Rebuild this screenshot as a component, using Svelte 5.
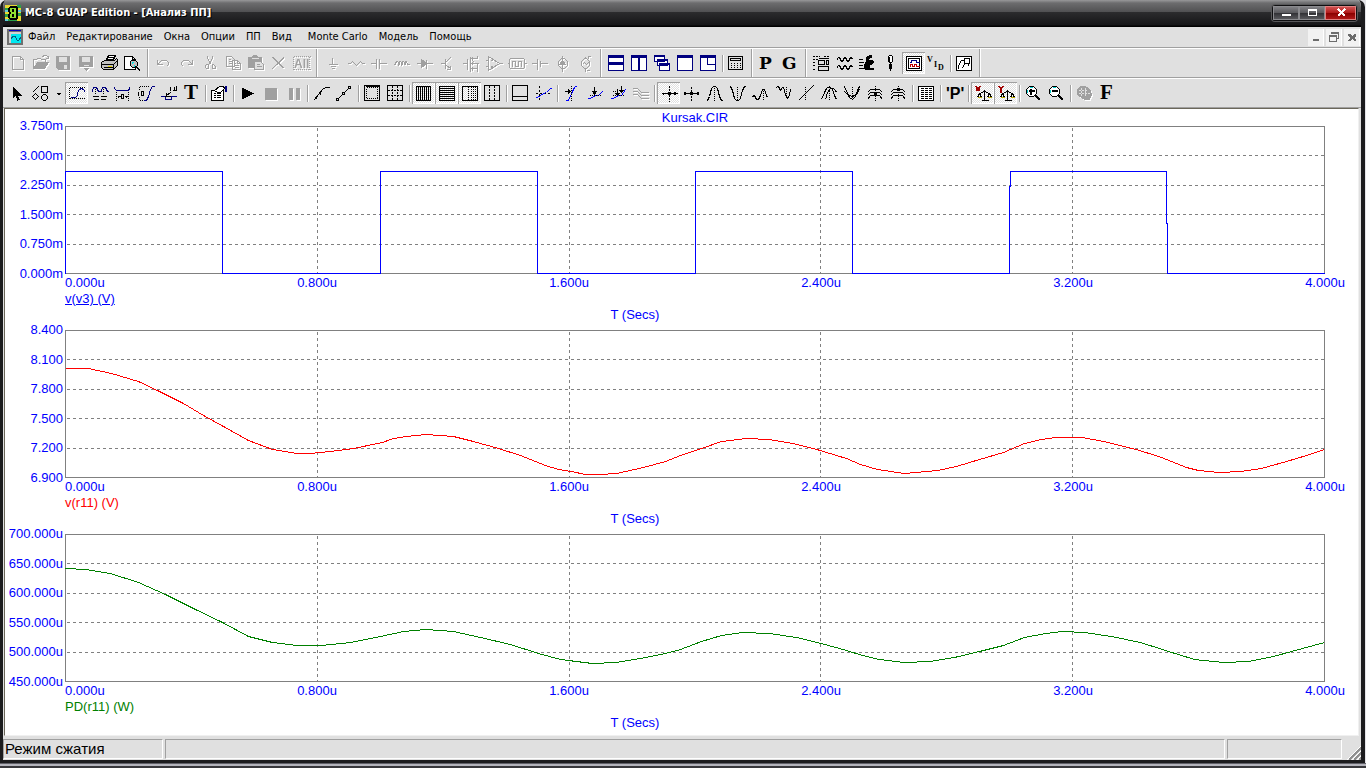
<script lang="ts">
  // [stroke, fill, path data, stroke dash]
  type Shape = [string, string, string, string?]
  // [text, x, y, size, colour, family]
  type Glyph = [string, number, number, number, string, string]

  interface Tool {
    id: string
    label: string
    off?: boolean
    on?: boolean
    narrow?: boolean
    shapes?: Shape[]
    glyphs?: Glyph[]
  }

  interface Chart {
    name: string
    color: string
    ticks: string[]
    points: string
  }

  const K = '#000'
  const N = '#000080'
  const B = '#0000ff'
  const G = '#a0a0a0'
  const W = '#fff'
  const X = 'none'

  const fileTools: Tool[] = [
    { id: 'new', label: 'Новый', off: true, shapes: [[G, X, 'M6 4h8l3 3v10H6zM14 4v3h3']] },
    { id: 'open', label: 'Открыть', off: true, shapes: [[G, X, 'M4 16V7h3l1-1h3l1 1h4v3M13 4l2-1h2l2 2M19 3v3h-3'], [G, G, 'M4 16l4-6h11l-4 6z']] },
    { id: 'save', label: 'Сохранить', off: true, shapes: [[G, G, 'M4 4h13v13H6l-2-2z'], ['#e0e0e0', '#e0e0e0', 'M7 5h7v4H7zM12 13h2v3h-2z']] },
    { id: 'saveas', label: 'Сохранить как', off: true, shapes: [[G, G, 'M4 4h13v10H4zM9 16h4l-2 2z'], ['#e0e0e0', '#e0e0e0', 'M7 5h7v4H7zM8 13h5']] },
    {
      id: 'print', label: 'Печать',
      shapes: [[K, W, 'M7 9l3-6h7l-3 6z'], [K, '#c0c0c0', 'M3 10l3-2h10l2-2 1 1v6l-4 4H5l-2-2z'], [K, X, 'M3 12h12l4-4M5 15h10M9 5h6M8 7h6M15 12v5'], ['#e0d000', X, 'M9 14h4']]
    },
    {
      id: 'preview', label: 'Просмотр',
      shapes: [[K, W, 'M3 4h8l3 3v10H3zM11 4v3h3'], [K, '#c0c0c0', 'M10 8h4l2 2v3l-2 2h-3l-2-2v-4z'], ['#00e0e0', X, 'M11 9v2M12 9v1M13 12v2'], [K, K, 'M15 14l3 3v1l-4-4z']]
    }
  ]

  const editTools: Tool[] = [
    { id: 'undo', label: 'Отменить', off: true, shapes: [[G, X, 'M5 7v5h5M5 12l4-4h5l2 2v2l-2 2']] },
    { id: 'redo', label: 'Повторить', off: true, shapes: [[G, X, 'M17 7v5h-5M17 12l-4-4H8l-2 2v2l2 2']] },
    { id: 'cut', label: 'Вырезать', off: true, shapes: [[G, X, 'M9 3v3l4 6M14 3v3l-4 6M8 12h2v4H8l-1-1v-2zM14 12h1l2 2v2h-3z']] },
    { id: 'copy', label: 'Копировать', off: true, shapes: [[G, X, 'M5 4h5l3 3v7H5zM7 7h2M7 9h4M7 11h3M11 8h5l3 3v6h-8zM16 8v3h3M13 11h1M13 13h4M13 15h4']] },
    { id: 'paste', label: 'Вставить', off: true, shapes: [[G, G, 'M4 5h3l2-2h3l2 2h3v10H4z'], ['#e0e0e0', X, 'M7 6h7'], [G, '#e0e0e0', 'M10 9h6l3 3v5h-9zM12 12h3M12 14h5']] },
    { id: 'delete', label: 'Удалить', off: true, shapes: [[G, X, 'M5 5l11 11M6 5l11 11M17 5L5 16M16 5L6 15']] },
    {
      id: 'all', label: 'Выделить все', off: true,
      shapes: [[G, X, 'M3 4h17M3 17h17M3 4v13M19 4v13', '1 1']],
      glyphs: [['All', 4, 16, 12, G, 'Liberation Sans']]
    }
  ]

  const partTools: Tool[] = [
    { id: 'ground', label: 'Земля', off: true, shapes: [[G, X, 'M11 5v7M7 12h9M9 14h5M10 16h3']] },
    { id: 'resistor', label: 'Резистор', off: true, shapes: [[G, X, 'M3 11h3l2-2 4 4 4-4 2 2h2']] },
    { id: 'capacitor', label: 'Конденсатор', off: true, shapes: [[G, X, 'M3 11h6M9 6v10M12 6v10M12 11h7']] },
    { id: 'inductor', label: 'Индуктивность', off: true, shapes: [[G, X, 'M3 12h2v-2l2-1 2 2-1 2M8 13v-3l2-1 2 2-1 2M11 13v-3l2-1 2 2-1 2M14 12v-2l2-1 1 3h2']] },
    { id: 'diode', label: 'Диод', off: true, shapes: [[G, X, 'M3 11h16M13 7v9'], [G, G, 'M8 7v8l5-4z']] },
    { id: 'npn', label: 'Транзистор', off: true, shapes: [[G, X, 'M4 11h5M9 6v10M9 10l5-5M9 12l6 5M14 13v4h-4']] },
    { id: 'mos', label: 'МОП', off: true, shapes: [[G, X, 'M3 11h5M8 6v11M11 4v15M13 4v4M13 14v4M11 6h7M11 11h8M11 16h7M18 3v3M18 11v8M14 9l-2 2 2 2']] },
    { id: 'opamp', label: 'ОУ', off: true, shapes: [[G, X, 'M6 4v14l11-7zM3 8h3M3 14h3M17 11h3M8 8h2M8 14h2M9 13v3']] },
    { id: 'pulse', label: 'Генератор', off: true, shapes: [[G, X, 'M5 6h13l1 1v8l-1 1H5l-1-1V7zM2 11h2M19 11h2M7 14V9h3v5h3V9h3v5']] },
    { id: 'battery', label: 'Батарея', off: true, shapes: [[G, X, 'M3 11h6M9 6v11M12 8v6M12 11h7']] },
    { id: 'isource', label: 'Источник тока', off: true, shapes: [[G, X, 'M11 3v16M10 6h3l3 3v4l-3 3h-3l-3-3V9z'], [G, G, 'M11 8l3 4H8z']] },
    { id: 'vsource', label: 'Источник напряжения', off: true, shapes: [[G, X, 'M11 4v2M11 16v3M10 6h2l3 3v4l-3 3h-2l-3-3V9zM13 4h3M14 3v3M12 18h3M8 12l2-2 2 2 2-2']] }
  ]

  const windowTools: Tool[] = [
    { id: 'tileh', label: 'Горизонтально', shapes: [[N, W, 'M3 3h15v7H3zM3 11h15v7H3z'], [N, X, 'M3 4h15M3 5h15M3 12h15']] },
    { id: 'tilev', label: 'Вертикально', shapes: [[N, W, 'M3 3h7v15H3zM11 3h7v15h-7z'], [N, X, 'M3 4h15M3 5h15']] },
    { id: 'cascade', label: 'Каскадом', shapes: [[N, W, 'M3 3h10v6H3zM6 7h10v6H6zM8 11h10v7H8z'], [N, X, 'M3 4h10M6 8h10M8 12h10']] },
    { id: 'maximize', label: 'Развернуть', shapes: [[N, W, 'M3 3h15v15H3z'], [N, X, 'M3 4h15M3 5h15']] },
    { id: 'overlap', label: 'Поверх', shapes: [[N, W, 'M3 3h15v15H3z'], [N, X, 'M3 4h15M3 5h15M10 5v7h8']] }
  ]

  const calcTools: Tool[] = [
    { id: 'calc', label: 'Калькулятор', shapes: [[K, X, 'M3 4h14v13H3zM5 6h10v2H5z'], [K, X, 'M5 11h11M5 13h11M5 15h11', '1 2']] }
  ]

  const letterTools: Tool[] = [
    { id: 'p', label: 'P', glyphs: [['P', 3, 17, 17, K, 'DejaVu Serif']] },
    { id: 'g', label: 'G', glyphs: [['G', 3, 17, 17, K, 'DejaVu Serif']] }
  ]

  const analysisTools: Tool[] = [
    { id: 'limits', label: 'Пределы', shapes: [[K, X, 'M2 4h7M13 4h5M2 7h5M2 10h3M2 13h3M2 17h3', '2 1'], [K, X, 'M8 8h6v4H8zM16 8h2v4h-2zM8 14h10v4H8zM8 6h10']] },
    { id: 'stepping', label: 'Варьирование', shapes: [[K, X, 'M3 8l2-3h1l2 4h1l2-4h1l2 4h1l2-4h1l1 2M3 16l2-3h1l2 4h1l2-4h1l2 4h1l2-4h1l1 2']] },
    { id: 'optimize', label: 'Оптимизация', shapes: [[K, X, 'M2 7h4M2 10h5M2 13h4M2 16h6'], [K, K, 'M8 13l2-4V5l3-2h2v2l-3 1v2h4l1 2-4 3v3h4v1H9l-1-1z']] },
    { id: 'watch', label: 'Наблюдение', shapes: [[K, W, 'M10 3h2l1 1v5l-1 1h-2l-1-1V4z'], [K, X, 'M11 10v8M10 11v5M12 11v5M10 4v5']] },
    { id: 'plot', label: 'График', on: true, shapes: [[K, W, 'M4 4h15v14H4z'], [K, X, 'M6 6h11v10H6z'], [N, X, 'M7 10h2V8h5v2h3'], ['#c00000', X, 'M7 14h1v-2h2v2h2v-2h2v2h3']] },
    { id: 'vid', label: 'VID', glyphs: [['V', 2, 10, 8, K, 'Liberation Serif'], ['I', 9, 15, 8, K, 'Liberation Serif'], ['D', 13, 18, 8, K, 'Liberation Serif']] }
  ]

  const probeTools: Tool[] = [
    { id: 'region', label: 'Область', shapes: [[K, W, 'M3 4h15v14H3z'], [K, X, 'M5 16v-3l3-5h3M11 6h5v5h-5zM11 11l-2 5M14 11l2 3']] }
  ]

  const topRow = [
    { tools: fileTools, sep: 'wide' },
    { tools: editTools, sep: 'wide' },
    { tools: partTools, sep: 'wide' },
    { tools: windowTools, sep: 'thin' },
    { tools: calcTools, sep: 'wide' },
    { tools: letterTools, sep: 'wide' },
    { tools: analysisTools, sep: 'thin' },
    { tools: probeTools, sep: 'wide' }
  ]

  const bottomRow: { tools: Tool[]; sep: string }[] = [
    {
      sep: 'thin',
      tools: [
        { id: 'select', label: 'Выбор', shapes: [[X, K, 'M6 4v12l3-3 2 5 2-1-2-4h4z']] },
        { id: 'shapes', label: 'Фигуры', shapes: [[K, X, 'M3 10l6-6M12 4h6v6h-6zM6 11l3 3-3 3-3-3zM14 12h2l2 2v2l-2 2h-2l-2-2v-2z']] },
        { id: 'more', label: 'Список фигур', narrow: true, shapes: [[X, K, 'M4 10h5l-2.5 3z']] },
        { id: 'scale', label: 'Масштаб', on: true, shapes: [[K, X, 'M4 5h15M4 5v12M4 16h15', '1 1'], [N, X, 'M5 15h5l2-2v-3l2-3 2-1 2 1 2 3']] },
        { id: 'cursor', label: 'Курсор', shapes: [[N, X, 'M3 9h1l1-4h3l2 4h3l1-4h3l2 4h1'], [K, X, 'M7 6v5M15 6v5', '1 1'], [K, X, 'M4 14h6M12 14h6M5 17h5M12 17h5']] },
        { id: 'htag', label: 'Горизонтальная метка', shapes: [[N, X, 'M3 4v2l2 2h12l1-2V4'], [K, X, 'M5 9v9M17 9v9', '1 1'], [K, X, 'M6 14h3M13 14h3M10 12h2v4h-2zM7 13v2M15 13v2']] },
        { id: 'vtag', label: 'Вертикальная метка', shapes: [[N, X, 'M9 18h3l2-4 2-7 2-3h2'], [K, X, 'M5 4h9M5 18h4M5 4v4M5 14v4', '1 1'], [K, X, 'M4 9v4M7 9h2v4H7z']] },
        { id: 'ptag', label: 'Метка точки', shapes: [[N, X, 'M3 14h5v3h6v-3h5'], [K, X, 'M8 14l6-5M9 10v4h4M13 4v4M18 4h1v4h-2V4M15 8h1']] },
        { id: 'text', label: 'Текст', glyphs: [['T', 4, 17, 21, K, 'Liberation Serif']] }
      ]
    },
    {
      sep: 'thin',
      tools: [
        { id: 'props', label: 'Свойства', shapes: [[K, W, 'M3 8h12v10H3z'], [K, X, 'M5 11h2M8 11h4M5 13h2M8 13h4M5 15h2M8 15h4'], [K, W, 'M6 8l5-4h4l1 2-4 4H9z'], [N, N, 'M17 4h1v5h-1z']] }
      ]
    },
    {
      sep: 'thin',
      tools: [
        { id: 'run', label: 'Пуск', shapes: [[X, K, 'M5 5v12l12-6z']] },
        { id: 'stop', label: 'Стоп', off: true, shapes: [[X, G, 'M5 5h12v12H5z']] },
        { id: 'pause', label: 'Пауза', off: true, shapes: [[X, G, 'M6 5h4v12H6zM13 5h4v12h-4z']] }
      ]
    },
    {
      sep: 'thin',
      tools: [
        { id: 'tokens', label: 'Маркеры', shapes: [[K, X, 'M3 17h1l8-10 3-2h4M6 13v3M10 9v3']] },
        { id: 'points', label: 'Точки', shapes: [[K, X, 'M3 16h2v2H3zM5 16l4-4M9 10h2v2H9zM11 10l4-4M15 4h2v2h-2z']] }
      ]
    },
    {
      sep: 'thin',
      tools: [
        { id: 'ruler', label: 'Линейка', shapes: [[K, X, 'M3 3h15v15H3zM4 4h13'], [K, X, 'M5 5h12M5 16h12M5 6v10M16 6v10', '1 1']] },
        { id: 'grid', label: 'Сетка', shapes: [[K, X, 'M3 3h15v15H3z'], [K, X, 'M8 3v15M13 3v15M3 8h15M3 13h15', '2 1']] }
      ]
    },
    {
      sep: 'thin',
      tools: [
        { id: 'vgrid', label: 'Вертикальная сетка', on: true, shapes: [[K, X, 'M4 4h14v14H4zM6 4v14M8 4v14M10 4v14M12 4v14M14 4v14M16 4v14']] },
        { id: 'hgrid', label: 'Горизонтальная сетка', on: true, shapes: [[K, X, 'M4 4h15v14H4zM4 6h15M4 8h15M4 10h15M4 12h15M4 14h15M4 16h15']] },
        { id: 'minor', label: 'Мелкая сетка', on: true, shapes: [[K, X, 'M4 4h15v14H4z'], [K, X, 'M10 4v14M13 4v14M15 4v14M17 4v14', '1 1']] },
        { id: 'major', label: 'Крупная сетка', shapes: [[K, X, 'M3 3h15v15H3z'], [K, X, 'M8 3v15M13 3v15', '2 1']] }
      ]
    },
    {
      sep: 'thin',
      tools: [
        { id: 'baseline', label: 'Базовая линия', shapes: [[K, X, 'M3 3h15v15H3zM3 14h15']] },
        { id: 'hcursor', label: 'Перекрестие', shapes: [[K, X, 'M7 3v15M3 11h16', '2 2'], [B, X, 'M3 15h2l6-4 3-1 4-4h1']] }
      ]
    },
    {
      sep: 'thin',
      tools: [
        { id: 'tox', label: 'К точке X', shapes: [[B, X, 'M5 18h3l3-7 3-6 3-2'], [K, X, 'M11 3v15', '1 1'], [K, K, 'M4 9h4M8 7v4l2-2z']] },
        { id: 'toy', label: 'К точке Y', shapes: [[B, X, 'M4 16h3l5-3h3l4-4'], [K, K, 'M11 4v6M9 9h4l-2 3z'], [K, X, 'M6 13h11', '1 1']] },
        { id: 'toperf', label: 'К параметру', shapes: [[B, X, 'M4 16h3l5-3h3l4-6'], [K, K, 'M11 6v6M9 11h4l-2 2zM15 3v6M13 8h4l-2 2z'], [K, X, 'M6 13h11M6 9h6', '1 1']] },
        { id: 'branch', label: 'Ветвь', off: true, shapes: [[G, X, 'M3 6h5l4 4h7M3 9h5l4 4h7M3 12h5l4 4h7']] }
      ]
    },
    {
      sep: 'thin',
      tools: [
        { id: 'next', label: 'Следующая', on: true, shapes: [[K, X, 'M12 3v16', '2 1'], [K, K, 'M4 11h16M6 10v2M11 10h2v2h-2zM17 10h1v2h-1z']] },
        { id: 'step', label: 'Шаг', shapes: [[K, X, 'M11 4v15', '2 1'], [K, K, 'M3 11h15M10 10h2v2h-2zM4 10h1v2H4zM17 10h1v2h-1z']] },
        { id: 'peak', label: 'Пик', shapes: [[K, X, 'M3 18h1l2-4 2-8 2-2h2l2 2 2 8 2 4h1'], [K, X, 'M11 5v13', '1 1']] },
        { id: 'valley', label: 'Впадина', shapes: [[K, X, 'M3 4h1l2 4 2 8 2 2h2l2-2 2-8 2-4h1'], [K, X, 'M11 4v13', '1 1']] },
        { id: 'high', label: 'Максимум', shapes: [[K, X, 'M3 14l2-1 2 4h2l2-4 2-6h2l2 6 1 2'], [K, X, 'M14 6v12', '1 1']] },
        { id: 'low', label: 'Минимум', shapes: [[K, X, 'M3 6l2-2h1l2 4 2-3h1l2 7 2 4 2-3 1-6'], [K, X, 'M14 4v12', '1 1']] },
        { id: 'inflect', label: 'Перегиб', shapes: [[K, X, 'M3 18l5-5 5-5 5-5'], [K, X, 'M10 4v14', '1 1']] },
        { id: 'ghigh', label: 'Глобальный максимум', shapes: [[K, X, 'M3 17l3-7 2-4 3-2 3 3 2 6 2 4M7 17l2-7 3-4h3l2 2 1 2'], [K, X, 'M11 4v14', '1 1']] },
        { id: 'glow', label: 'Глобальный минимум', shapes: [[K, X, 'M3 4l3 7 2 4 3 2 3-3 2-6 2-4M3 9l3 3 5 2 4-2 3-5'], [K, X, 'M11 4v14', '1 1']] },
        { id: 'top', label: 'Верх', shapes: [[K, X, 'M3 10l3-3h9l3 3M3 13l3-3h9l3 3M3 17l3-4h9l3 4'], [K, K, 'M10 10h2v2h-2z'], [K, X, 'M11 3v15', '1 1']] },
        { id: 'bottom', label: 'Низ', shapes: [[K, X, 'M3 10l3-3h9l3 3M3 13l3-3h9l3 3M3 17l3-4h9l3 4'], [K, K, 'M10 6h2v2h-2z'], [K, X, 'M11 3v15', '1 1']] }
      ]
    },
    {
      sep: 'thin',
      tools: [
        { id: 'table', label: 'Таблица', shapes: [[K, W, 'M3 4h15v14H3z'], [K, X, 'M5 6h12M5 8h12M5 10h12M5 12h12M5 14h12M5 16h12', '3 1']] }
      ]
    },
    { sep: 'thin', tools: [{ id: 'perf', label: 'P', glyphs: [["'P'", 3, 17, 16, K, 'Liberation Sans']] }] },
    {
      sep: 'thin',
      tools: [
        { id: 'xscale', label: 'Шкала X', on: true, shapes: [['#a00000', X, 'M4 4l4 5M5 4l4 5M8 4L4 9M9 4L5 9'], [K, X, 'M13 7v11M10 18h7M8 11l5-2 5 2M8 11l-2 4M8 11l2 4M18 11l-2 4M18 11l2 4'], ['#c0b000', X, 'M6 15h4M16 15h4']] },
        { id: 'yscale', label: 'Шкала Y', on: true, shapes: [['#a00000', X, 'M4 4l2 2v4M5 4l2 2v4M9 4L7 6M8 4L6 6'], [K, X, 'M13 7v11M10 18h7M8 11l5-2 5 2M8 11l-2 4M8 11l2 4M18 11l-2 4M18 11l2 4'], ['#c0b000', X, 'M6 15h4M16 15h4']] }
      ]
    },
    {
      sep: 'thin',
      tools: [
        { id: 'zoomin', label: 'Увеличить', shapes: [[K, W, 'M7 4h4l3 3v4l-3 3H7l-3-3V7z'], ['#00d0d0', X, 'M5 7v3M7 5h3'], [K, X, 'M6 9h6M6 8h6M9 6v6M8 6v6M13 13l5 5M13 12l5 5M12 13l5 5']] },
        { id: 'zoomout', label: 'Уменьшить', shapes: [[K, W, 'M7 4h4l3 3v4l-3 3H7l-3-3V7z'], ['#00d0d0', X, 'M5 7v3M7 5h3'], [K, X, 'M6 9h6M6 8h6M13 13l5 5M13 12l5 5M12 13l5 5']] }
      ]
    },
    {
      sep: 'none',
      tools: [
        { id: 'globe', label: 'Глобус', off: true, shapes: [[G, G, 'M7 4h5l5 4 1 4-2 5h-5l-7-5V7z'], ['#e0e0e0', X, 'M5 8h9M5 11h11M8 5v8M12 5v9', '2 1']] },
        { id: 'font', label: 'Шрифт', glyphs: [['F', 4, 17, 21, K, 'Liberation Serif']] }
      ]
    }
  ]

  const menus = ['Файл', 'Редактирование', 'Окна', 'Опции', 'ПП', 'Вид', 'Monte Carlo', 'Модель', 'Помощь']

  const times = ['0.000u', '0.800u', '1.600u', '2.400u', '3.200u', '4.000u']
  const xGrid = [252, 504, 755, 1007]
  const yGrid = [29, 59, 88, 118]

  const charts: Chart[] = [
    {
      name: 'v(v3) (V)',
      color: '#0000ff',
      ticks: ['3.750m', '3.000m', '2.250m', '1.500m', '0.750m', '0.000m'],
      points: '0,147 0,45 157,45 157,147 315,147 315,45 472,45 472,147 630,147 630,45 787,45 787,147 944,147 944,60 945,60 945,45 1101,45 1101,97 1102,97 1102,147 1259,147'
    },
    {
      name: 'v(r11) (V)',
      color: '#ff0000',
      ticks: ['8.400', '8.100', '7.800', '7.500', '7.200', '6.900'],
      points: '0,38 23,38 46,43 73,51 94,61 118,73 138,85 158,96 183,110 207,119 232,123 245,123 265,121 288,118 317,112 328,108 341,106 361,104 388,106 408,111 433,118 455,125 480,135 493,139 506,141 520,144 535,144 551,143 578,137 600,131 615,125 636,118 656,111 673,109 681,108 704,109 727,113 748,118 781,128 795,134 812,139 839,143 872,140 891,136 914,129 938,122 959,113 976,109 990,107 1017,107 1038,111 1071,119 1096,127 1121,137 1133,140 1154,142 1175,141 1196,138 1221,131 1241,125 1259,119'
    },
    {
      name: 'PD(r11) (W)',
      color: '#008000',
      ticks: ['700.000u', '650.000u', '600.000u', '550.000u', '500.000u', '450.000u'],
      points: '0,34 20,35 45,39 73,48 100,60 130,75 157,88 183,102 207,108 232,111 256,111 285,108 315,102 338,97 360,95 388,97 415,103 445,110 473,119 495,125 527,129 550,128 575,124 600,119 615,115 636,107 656,101 677,98 704,99 731,103 756,109 781,116 797,121 814,125 839,128 864,127 889,123 914,117 938,111 959,103 980,99 997,97 1019,98 1046,102 1075,108 1100,116 1129,125 1158,128 1183,127 1208,122 1237,114 1259,108'
    }
  ]

  let active = $state('v(v3) (V)')
</script>

{#snippet toolbar(groups: { tools: Tool[]; sep: string }[], label: string)}
  <div class="toolbar" role="toolbar" aria-label={label}>
    {#each groups as group}
      {#each group.tools as tool (tool.id)}
        <button class="tool" class:off={tool.off} class:on={tool.on} class:narrow={tool.narrow} disabled={tool.off} aria-label={tool.label}>
          <svg viewBox={tool.narrow ? '0 0 13 22' : '0 0 23 22'} aria-hidden="true">
            <g transform="translate(.5 .5)">
              {#each tool.shapes ?? [] as [stroke, fill, d, dash]}
                <path {d} {stroke} {fill} stroke-dasharray={dash} />
              {/each}
            </g>
            {#each tool.glyphs ?? [] as [text, x, y, size, color, family]}
              <text {x} {y} font-size={size} fill={color} font-family={family}>{text}</text>
            {/each}
          </svg>
        </button>
      {/each}
      {#if group.sep !== 'none'}
        <span class="sep {group.sep}"></span>
      {/if}
    {/each}
  </div>
{/snippet}

<div class="desktop">
  <div class="window">
    <header class="titlebar">
      <svg class="app-icon" viewBox="0 0 16 16" aria-hidden="true">
        <path fill="#e8d830" d="M0 0h16v16H0z" />
        <path fill="#28a048" d="M0 3h3v2H0zM0 9h3v3H0zM12 0h4v3h-4zM13 8h3v3h-3zM3 14h9v2H3z" />
        <path fill="#60c8d8" d="M0 5h3v2H0zM13 5h3v2h-3zM0 14h3v2H0z" />
        <path d="M5 1h6l2 2v4l-1 1 1 1v4l-2 2H5l-2-2V9l1-1-1-1V3z" />
        <path fill="#90e030" fill-rule="evenodd" d="M5 3h6v4l-1 1 1 1v4H5V9l1-1-1-1zM7 4v3h2V4zM7 9v3h2V9z" />
      </svg>
      <h1>MC-8 GUAP Edition - [Анализ ПП]</h1>
      <div class="caption-buttons">
        <button aria-label="Свернуть"><svg viewBox="0 0 24 12"><path fill="#fff" d="M8 7h9v2H8z" /></svg></button>
        <button aria-label="Развернуть"><svg viewBox="0 0 24 12"><path fill="#fff" fill-rule="evenodd" d="M8 2h9v7H8zM9 4v4h7V4z" /></svg></button>
        <button class="close" aria-label="Закрыть"><svg viewBox="0 0 24 12"><path stroke="#fff" stroke-width="2" d="M9 2l7 7M16 2l-7 7" /></svg></button>
      </div>
    </header>

    <nav class="menubar">
      <svg class="doc-icon" viewBox="0 0 16 16" aria-hidden="true">
        <path fill="#707070" d="M0 0h16v16H0z" />
        <path fill="#d0d0d0" d="M2 3h12v11H2z" />
        <path fill="#0000c0" d="M2 1h12v1H2z" />
        <path fill="#00e8f0" d="M4 5h10v9H4z" />
        <path fill="none" stroke="#006080" d="M4 10l2-3h2l2 4h2l2-3" />
      </svg>
      {#each menus as menu}
        <button class="menu" class:spaced={menu === 'Monte Carlo'}>{menu}</button>
      {/each}
      <div class="mdi-buttons">
        <button aria-label="Свернуть окно"><svg viewBox="0 0 16 17"><path d="M5 10h6v2H5z" /></svg></button>
        <button aria-label="Восстановить окно"><svg viewBox="0 0 16 17"><path fill-rule="evenodd" d="M5 3h8v7h-2V9h1V5H5zM3 6h8v7H3zM4 8v4h6V8z" /></svg></button>
        <button aria-label="Закрыть окно"><svg viewBox="0 0 16 17"><path d="M4 5h2l2 2 2-2h2v2l-2 2 2 2v1h-2l-2-2-2 2H4v-1l2-2-2-2z" /></svg></button>
      </div>
    </nav>

    {@render toolbar(topRow, 'Стандартная')}
    {@render toolbar(bottomRow, 'Анализ')}

    <main class="sheet">
      <h2>Kursak.CIR</h2>
      {#each charts as chart (chart.name)}
        <section class="chart">
          <div class="y-axis">
            {#each chart.ticks as tick}
              <span>{tick}</span>
            {/each}
          </div>
          <div class="plot">
            <svg viewBox="0 0 1260 148" preserveAspectRatio="none" role="img" aria-label={chart.name}>
              <g transform="translate(.5 .5)">
                {#each yGrid as y}
                  <path class="grid" d="M1 {y}H1259" />
                {/each}
                {#each xGrid as x}
                  <path class="grid" d="M{x} 1V147" />
                {/each}
                <path class="frame" d="M0 0H1259V147H0z" />
                <polyline points={chart.points} stroke={chart.color} />
              </g>
            </svg>
            <div class="x-axis">
              {#each times as time}
                <span>{time}</span>
              {/each}
            </div>
            <button class="trace" class:active={active === chart.name} style="color: {chart.color}" onclick={() => (active = chart.name)}>
              {chart.name}
            </button>
            <p class="x-title">T (Secs)</p>
          </div>
        </section>
      {/each}
    </main>

    <footer class="status">
      <div class="cell mode">Режим сжатия</div>
      <div class="cell info"></div>
      <div class="cell extra"></div>
      <svg class="grip" viewBox="0 0 14 14" aria-hidden="true">
        <path stroke="#fff" d="M0 14L14 0M5 14l9-9M10 14l4-4" />
        <path stroke="#909090" stroke-width="2" d="M2 14L14 2M7 14l7-7M12 14l2-2" />
      </svg>
    </footer>
  </div>
  <div class="taskbar-edge"></div>
</div>

<style>
  :global(body) {
    background: #e4e4e8;
  }

  .desktop {
    display: flex;
    flex-direction: column;
    min-height: 100vh;
    box-sizing: border-box;
  }

  .window {
    display: flex;
    flex-direction: column;
    flex: 1;
    box-sizing: border-box;
    margin-right: 1px;
    border: solid #1c1c1e;
    border-width: 0 4px 3px 3px;
    border-radius: 7px 7px 0 0;
    background: #e0e0e0;
    overflow: hidden;
    font-family: 'DejaVu Sans Condensed', 'DejaVu Sans', sans-serif;
    font-size: 11px;
    color: #000;
  }

  button {
    padding: 0;
    border: none;
    background: none;
    font: inherit;
    color: inherit;
  }

  svg {
    display: block;
    shape-rendering: crispEdges;
  }

  .titlebar {
    display: flex;
    align-items: center;
    height: 27px;
    margin: 0 -4px 0 -3px;
    padding: 0 8px 2px 5px;
    background: linear-gradient(#98989a, #6c6c6e 3px, #505052 12px, #2c2c2e 12px, #161618 25px, #000 26px);
    box-sizing: border-box;
  }

  .app-icon {
    width: 16px;
    height: 16px;
  }

  h1 {
    flex: 1;
    margin: 0 0 0 4px;
    font-size: 11px;
    font-weight: bold;
    color: #fff;
    text-shadow: 1px 1px 0 #000;
  }

  .caption-buttons {
    display: flex;
    border: 1px solid #101012;
    border-radius: 3px;
    box-shadow: 0 0 0 1px #58585a;
  }

  .caption-buttons button {
    width: 26px;
    height: 14px;
    border: 1px solid #8a8a8e;
    background: linear-gradient(#808084, #58585c 6px, #303034 6px, #58585c);
    box-sizing: border-box;
  }

  .caption-buttons .close {
    width: 31px;
    border-color: #e08080;
    background: linear-gradient(#d05050, #b01818 6px, #880000 6px, #b01818);
  }

  .caption-buttons svg {
    width: 24px;
    height: 12px;
    margin: 0 auto;
  }

  .menubar {
    display: flex;
    align-items: center;
    height: 20px;
    padding: 0 1px 0 4px;
    border-bottom: 1px solid #a0a0a0;
  }

  .doc-icon {
    width: 16px;
    height: 16px;
  }

  .menu {
    margin-left: 5px;
    line-height: 16px;
    white-space: nowrap;
  }

  .menu + .menu {
    margin-left: 11px;
  }

  .menu + .menu.spaced {
    margin-left: 16px;
  }

  .mdi-buttons {
    display: flex;
    gap: 2px;
    margin-left: auto;
  }

  .mdi-buttons button {
    width: 16px;
    height: 17px;
    background: #f2f2f2;
    border-right: 1px solid #fff;
  }

  .mdi-buttons svg {
    width: 16px;
    height: 17px;
    fill: #6c6c6c;
  }

  .toolbar {
    display: flex;
    align-items: center;
    height: 28px;
    padding-left: 3px;
    border-top: 1px solid #fff;
    border-bottom: 1px solid #a0a0a0;
  }

  .tool {
    flex: none;
    width: 23px;
    height: 22px;
  }

  .tool svg {
    width: 23px;
    height: 22px;
    overflow: visible;
  }

  .tool.narrow,
  .tool.narrow svg {
    width: 13px;
  }

  .tool text {
    font-weight: bold;
  }

  .tool.off svg {
    filter: drop-shadow(1px 1px 0 #fff);
  }

  .tool.on {
    box-shadow: inset 1px 1px 0 #a0a0a0, inset -1px -1px 0 #fff;
    background: repeating-conic-gradient(#fff 0 25%, #e0e0e0 0 50%) 0 0 / 2px 2px;
  }

  .sep {
    flex: none;
    box-sizing: border-box;
    width: 2px;
    border-left: 1px solid #a0a0a0;
    border-right: 1px solid #fff;
  }

  .sep.wide {
    align-self: stretch;
    margin: 0 3px;
  }

  .sep.thin {
    height: 17px;
    margin: 0 1px 0 2px;
  }

  .sheet {
    flex: 1;
    margin: 0 2px 2px 1px;
    padding: 1px 33px 0 0;
    border: 1px solid #f0f0f0;
    border-top-color: #6b675a;
    border-left-color: #6b675a;
    background: #fff;
    font-family: 'Liberation Sans', Arial, sans-serif;
    font-size: 13px;
    line-height: 16px;
    color: #0000ff;
  }

  h2 {
    margin: 0 0 0 60px;
    font-size: 13px;
    font-weight: normal;
    text-align: center;
  }

  .chart {
    display: grid;
    grid-template-columns: 60px minmax(0, 1fr);
    margin-bottom: 7px;
  }

  .chart:last-child {
    margin-bottom: 0;
  }

  .y-axis {
    display: flex;
    flex-direction: column;
    justify-content: space-between;
    align-items: flex-end;
    height: 148px;
    padding-right: 2px;
  }

  .y-axis span {
    display: flex;
    align-items: center;
    height: 0;
  }

  .plot svg {
    width: 100%;
    height: 148px;
    margin-bottom: 1px;
  }

  .plot path,
  .plot polyline {
    fill: none;
    vector-effect: non-scaling-stroke;
  }

  .frame {
    stroke: #808080;
  }

  .grid {
    stroke: #808080;
    stroke-dasharray: 3 3;
  }

  .x-axis {
    display: flex;
    justify-content: space-between;
  }

  .x-axis span {
    display: flex;
    justify-content: center;
    width: 0;
  }

  .x-axis span:first-child {
    justify-content: flex-start;
  }

  .trace {
    display: block;
    line-height: 16px;
  }

  .trace.active {
    text-decoration: underline;
  }

  .x-title {
    margin: 0;
    padding-right: 120px;
    text-align: center;
  }

  .status {
    display: flex;
    align-items: flex-end;
    gap: 2px;
    height: 22px;
    font-family: 'Liberation Sans', Arial, sans-serif;
    font-size: 15px;
    line-height: 18px;
  }

  .cell {
    height: 20px;
    margin-bottom: 1px;
    box-sizing: border-box;
    border: 1px solid #fff;
    border-top-color: #a0a0a0;
    border-left-color: #a0a0a0;
  }

  .mode {
    width: 160px;
    padding-left: 1px;
  }

  .info {
    flex: 1;
  }

  .extra {
    width: 115px;
  }

  .grip {
    width: 14px;
    height: 14px;
    margin-left: 3px;
  }

  .taskbar-edge {
    height: 5px;
    box-sizing: border-box;
    border-top: 1px solid #606068;
    border-bottom: 2px solid #38383c;
    background: #b4b4bc;
  }
</style>
